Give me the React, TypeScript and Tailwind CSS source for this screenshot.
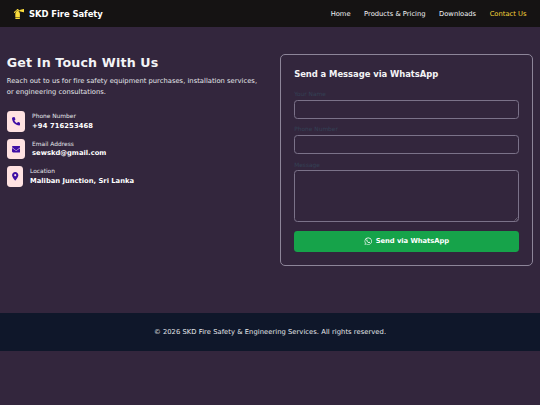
import { FaEnvelope, FaFireExtinguisher, FaLocationDot, FaPhone, FaWhatsapp } from 'react-icons/fa6'

const navLinks = [
  { name: 'Home', href: '#home' },
  { name: 'Products & Pricing', href: '#products' },
  { name: 'Downloads', href: '#downloads' },
  { name: 'Contact Us', href: '#contact', active: true },
]

const contacts = [
  { label: 'Phone Number', value: '+94 716253468', icon: FaPhone, box: 'w-[18.6px]', text: 'tracking-[0.1px]' },
  { label: 'Email Address', value: 'sewskd@gmail.com', icon: FaEnvelope, box: 'w-[18.6px]', text: '' },
  { label: 'Location', value: 'Maliban Junction, Sri Lanka', icon: FaLocationDot, box: 'w-[16.5px]', text: '' },
]

const fieldClass =
  'block w-full rounded-[3.4px] border border-[#7b7289] bg-transparent px-1.5 text-[6.75px] text-white outline-none'
const labelClass = 'block h-[8.4px] text-[5.9px] leading-[8.4px] text-[#334155]'

function Navbar() {
  return (
    <nav className="flex h-[27px] items-center justify-between bg-[#151313] px-[13.5px] pt-px">
      <a href="#home" className="flex items-center gap-[5px] text-[8.44px] font-bold tracking-[-0.06px] text-white">
        <FaFireExtinguisher className="h-[10.5px] w-[10.5px] text-[#fadc3c]" />
        SKD Fire Safety
      </a>
      <div className="flex gap-[13.5px] text-[6.75px]">
        {navLinks.map((link) => (
          <a key={link.name} href={link.href} className={link.active ? 'text-[#f5d53a]' : 'text-[#f3f4f6]'}>
            {link.name}
          </a>
        ))}
      </div>
    </nav>
  )
}

function ContactInfo() {
  return (
    <div>
      <h1 className="mb-[6.75px] pt-[0.5px] text-[12.66px] leading-[15.2px] font-bold tracking-[0.15px] text-[#f3f4f6]">
        Get In Touch With Us
      </h1>
      <p className="mb-[12.5px] text-[6.75px] leading-[11px] tracking-[0.015px] text-[#e5e7eb]">
        Reach out to us for fire safety equipment purchases, installation services, or engineering consultations.
      </p>
      <div className="flex flex-col gap-[6.75px]">
        {contacts.map((item) => (
          <div key={item.label} className="flex h-[20.9px] items-center gap-[6.75px]">
            <div className={`flex h-full items-center justify-center rounded-[3.4px] bg-[#ffe2e2] ${item.box}`}>
              <item.icon className="h-[8.44px] w-[8.44px] text-[#3f0fa5]" />
            </div>
            <div>
              <p className="text-[5.9px] leading-[8.4px] text-[#e5e7eb]">{item.label}</p>
              <p className={`text-[6.75px] leading-[10.1px] font-bold text-white ${item.text}`}>{item.value}</p>
            </div>
          </div>
        ))}
      </div>
    </div>
  )
}

function MessageForm() {
  return (
    <form className="h-[212px] rounded-[5px] border border-[#8d8599] px-[13px] pt-[12.5px]">
      <h2 className="mb-[10.4px] text-[8.44px] leading-[12px] font-bold tracking-[-0.05px] text-[#f3f4f6]">
        Send a Message via WhatsApp
      </h2>
      <label className={labelClass} htmlFor="name">Your Name</label>
      <input id="name" className={`${fieldClass} mt-[2px] mb-[6.6px] h-[18.5px]`} />
      <label className={labelClass} htmlFor="phone">Phone Number</label>
      <input id="phone" className={`${fieldClass} mt-[1.7px] mb-[6.6px] h-[18.5px]`} />
      <label className={labelClass} htmlFor="message">Message</label>
      <div className="relative mt-[1.3px] mb-[8.8px]">
        <textarea id="message" className={`${fieldClass} h-[51.5px] resize-none`} />
        <svg className="absolute right-[1px] bottom-[1px] h-[4px] w-[4px]" viewBox="0 0 4 4" stroke="#9b95a5" strokeWidth="0.5">
          <path d="M0.5 3.5L3.5 0.5M2.2 3.5L3.5 2.2" />
        </svg>
      </div>
      <button
        type="button"
        className="flex h-[21px] w-full items-center justify-center gap-[3px] rounded-[3.4px] bg-[#16a34a] text-[6.75px] font-bold tracking-[-0.04px] text-white"
      >
        <FaWhatsapp className="h-[8.4px] w-[8.4px]" />
        Send via WhatsApp
      </button>
    </form>
  )
}

export default function App() {
  return (
    <div className="h-screen overflow-hidden bg-[#33263d] font-['DejaVu_Sans',sans-serif]">
      <Navbar />
      <main className="grid grid-cols-2 gap-[20.25px] px-[6.75px] py-[27px]">
        <ContactInfo />
        <MessageForm />
      </main>
      <footer className="mt-[20px] flex h-[37.5px] items-center justify-center bg-[#0f172a] text-[6.75px] tracking-[0.05px] text-[#e5e7eb]">
        © 2026 SKD Fire Safety &amp; Engineering Services. All rights reserved.
      </footer>
    </div>
  )
}
